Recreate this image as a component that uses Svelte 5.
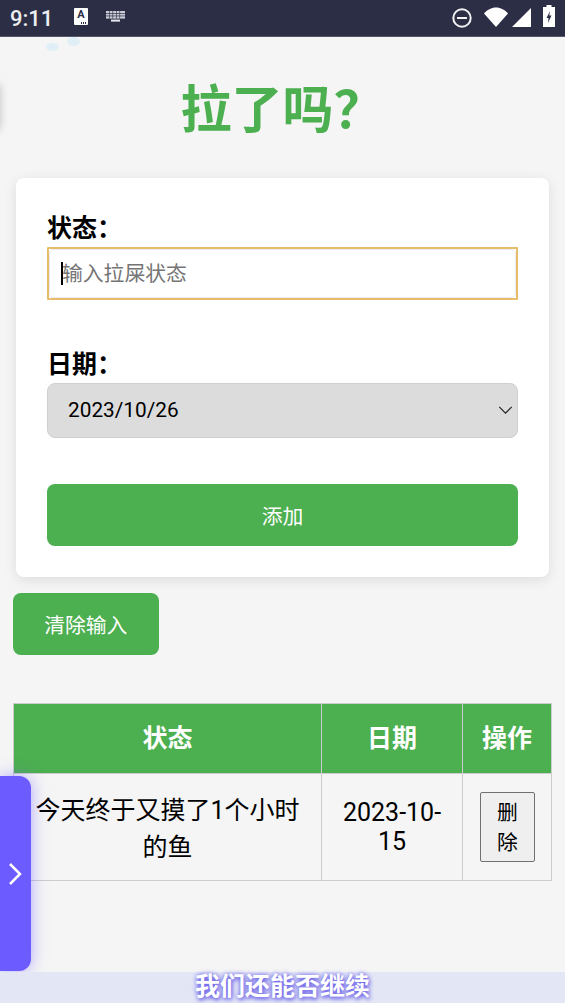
<script>
  const rows = [{ status: '今天终于又摸了1个小时的鱼', date: '2023-10-15' }];
</script>

<div class="page">
  <header class="status">
    <span class="time">9:11</span>
    <span class="note-a"><span>A</span><i></i></span>
    <svg class="kbd" viewBox="0 0 19 11" aria-hidden="true">
      <g fill="#e8e8ee">
        <rect x="0" y="0" width="19" height="7.6" opacity=".85"/>
        <rect x="5" y="8.6" width="9" height="2"/>
      </g>
      <g fill="#2c2e45">
        <rect x="0" y="2" width="19" height=".7"/>
        <rect x="0" y="4.6" width="19" height=".7"/>
        <rect x="3" y="0" width=".6" height="7.6"/>
        <rect x="6.5" y="0" width=".6" height="7.6"/>
        <rect x="10" y="0" width=".6" height="7.6"/>
        <rect x="13.5" y="0" width=".6" height="7.6"/>
      </g>
    </svg>
    <span class="spacer"></span>
    <svg class="dnd" viewBox="0 0 20 20" aria-hidden="true">
      <circle cx="10" cy="10" r="8.7" fill="none" stroke="#f2f2f5" stroke-width="2"/>
      <rect x="5" y="9" width="10" height="2" fill="#f2f2f5"/>
    </svg>
    <svg class="wifi" viewBox="0 0 24 20" aria-hidden="true">
      <path d="M0 6.5C3 3 7.500 .5 12 .5S21 3 24 6.500L12 20Z" fill="#fff"/>
    </svg>
    <svg class="signal" viewBox="0 0 19 19" aria-hidden="true">
      <path d="M19 0V19H0Z" fill="#fff"/>
    </svg>
    <svg class="battery" viewBox="0 0 12 22" aria-hidden="true">
      <path d="M3.500 0H8.500V2H12V22H0V2H3.500Z" fill="#fff"/>
      <path d="M7 6L3.500 13H5.500L5 18L8.500 10.500H6.300Z" fill="#2c2e45"/>
    </svg>
  </header>

  <div class="blobs" aria-hidden="true"><i></i><i></i></div>
  <div class="edge-shadow" aria-hidden="true"></div>

  <h1>拉了吗？</h1>

  <form class="card" onsubmit={(e) => e.preventDefault()}>
    <label class="label" for="state">状态：</label>
    <div class="input-wrap">
      <input id="state" type="text" placeholder="输入拉屎状态" />
      <span class="caret"></span>
    </div>

    <label class="label second" for="date">日期：</label>
    <div class="select-wrap">
      <select id="date"><option>2023/10/26</option></select>
      <svg viewBox="0 0 16 9" aria-hidden="true">
        <path d="M1 1L8 8L15 1" fill="none" stroke="#222" stroke-width="1.300"/>
      </svg>
    </div>

    <button class="btn wide" type="submit">添加</button>
  </form>

  <button class="btn clear" type="button">清除输入</button>

  <table>
    <colgroup>
      <col class="c1" /><col class="c2" /><col class="c3" />
    </colgroup>
    <thead>
      <tr><th>状态</th><th>日期</th><th>操作</th></tr>
    </thead>
    <tbody>
      {#each rows as row}
        <tr>
          <td class="state-cell">{row.status}</td>
          <td>{row.date}</td>
          <td><button class="del" type="button">删除</button></td>
        </tr>
      {/each}
    </tbody>
  </table>

  <div class="side-tab" aria-hidden="true">
    <svg viewBox="0 0 14 24">
      <path d="M2 2L12 12L2 22" fill="none" stroke="#fff" stroke-width="2.500"/>
    </svg>
  </div>

  <div class="subtitle">我们还能否继续</div>
</div>

<style>
  :global(body) {
    margin: 0;
    background: #f5f5f5;
  }

  .page {
    position: relative;
    height: 1003px;
    overflow: hidden;
    background: #f5f5f5;
    font-family: Roboto, "Noto Sans CJK SC", sans-serif;
    color: #000;
  }

  .status {
    display: flex;
    align-items: center;
    height: 36px;
    padding: 0 10px;
    background: #2c2e45;
    border-bottom: 1px solid #55566a;
    box-sizing: content-box;
  }

  .time {
    font-size: 22px;
    font-weight: 500;
    color: #eeeef2;
    width: 64px;
  }

  .note-a {
    position: relative;
    width: 14px;
    height: 17px;
    background: #fff;
    border-radius: 1px;
    display: flex;
    justify-content: center;
    color: #2c2e45;
    font-size: 11px;
    font-weight: 700;
    line-height: 14px;
    margin-top: -3px;
  }

  .note-a i {
    position: absolute;
    right: 1px;
    bottom: 1px;
    width: 6px;
    height: 2px;
    background: repeating-linear-gradient(90deg, #2c2e45 0 1px, #fff 1px 2px);
  }

  .kbd {
    width: 19px;
    height: 11px;
    margin: -3px 0 0 18px;
  }

  .spacer { flex: 1; }

  .dnd {
    width: 20px;
    height: 20px;
    margin-top: -1px;
    margin-right: 12px;
  }

  .wifi {
    width: 24px;
    height: 20px;
    margin-top: -2px;
    margin-right: 4px;
  }

  .signal {
    width: 19px;
    height: 19px;
    margin-top: -1px;
    margin-right: 12px;
  }

  .battery {
    width: 12px;
    height: 22px;
    margin-top: -5px;
  }

  .blobs {
    position: absolute;
    left: 45px;
    top: 37px;
    width: 36px;
    height: 16px;
    overflow: hidden;
  }

  .blobs i {
    position: absolute;
    display: block;
    background: #e0eff6;
    border-radius: 50%;
  }

  .blobs i:first-child { left: 1px; top: 6px; width: 13px; height: 8px; }
  .blobs i:last-child { left: 22px; top: 0; width: 13px; height: 9px; }

  .edge-shadow {
    position: absolute;
    left: -8px;
    top: 84px;
    width: 8px;
    height: 46px;
    border-radius: 4px;
    box-shadow: 0 0 9px rgba(0, 0, 0, .22);
  }

  h1 {
    margin: 0;
    padding-top: 38px;
    height: 107px;
    box-sizing: border-box;
    font-size: 51px;
    line-height: 72px;
    font-weight: 700;
    text-align: center;
    color: #4caf50;
  }

  .card {
    margin: 34px 16px 0;
    padding: 32px 31px 31px;
    height: 399px;
    box-sizing: border-box;
    background: #fff;
    border-radius: 8px;
    box-shadow: 0 3px 13px rgba(0, 0, 0, .1);
  }

  .label {
    display: block;
    height: 37px;
    font-size: 25px;
    line-height: 37px;
    font-weight: 700;
  }

  .label.second {
    margin-top: 47px;
  }

  .input-wrap {
    position: relative;
    height: 53px;
    box-sizing: border-box;
    border: 2px solid #e6bd6a;
    border-radius: 1px;
    margin-bottom: -1px;
  }

  input {
    display: block;
    width: 100%;
    height: 100%;
    box-sizing: border-box;
    padding: 0 12px;
    border: 1px solid #ececec;
    border-radius: 5px;
    background: #fff;
    font: 20.800px Roboto, "Noto Sans CJK SC", sans-serif;
    outline: none;
  }

  input::placeholder { color: #757575; opacity: 1; }

  .caret {
    position: absolute;
    left: 12px;
    top: 13px;
    width: 2px;
    height: 23px;
    background: #000;
  }

  .select-wrap {
    position: relative;
  }

  select {
    display: block;
    width: 100%;
    height: 55px;
    box-sizing: border-box;
    padding: 0 20px 2px;
    appearance: none;
    border: 1.500px solid #cfcfcf;
    border-radius: 8px;
    background: #dcdcdc;
    color: #000;
    font: 20.800px Roboto, "Noto Sans CJK SC", sans-serif;
  }

  .select-wrap svg {
    position: absolute;
    right: 5px;
    top: 23px;
    width: 15px;
    height: 8px;
  }

  .btn {
    display: block;
    border: none;
    border-radius: 8px;
    background: #4caf50;
    color: #fff;
    font: 20.800px Roboto, "Noto Sans CJK SC", sans-serif;
  }

  .wide {
    width: 100%;
    height: 62px;
    margin-top: 46px;
  }

  .clear {
    width: 146.500px;
    height: 62px;
    margin: 16px 0 0 12.500px;
  }

  table {
    width: 538px;
    margin: 48px 0 0 13px;
    table-layout: fixed;
    border-collapse: collapse;
    font-size: 25px;
  }

  .c1 { width: 308px; }
  .c2 { width: 141px; }
  .c3 { width: 89px; }

  th, td {
    border: 1.300px solid #ccc;
    padding: 16px;
    text-align: center;
  }

  th {
    height: 70px;
    box-sizing: border-box;
    padding-top: 13px;
    padding-bottom: 19px;
    background: #4caf50;
    color: #fff;
    font-weight: 700;
  }

  td {
    height: 107px;
    padding-top: 0;
    padding-bottom: 0;
    box-sizing: border-box;
  }

  .state-cell {
    line-height: 37px;
    padding-top: 4px;
  }

  .del {
    display: block;
    width: 55px;
    height: 70px;
    margin: 0 0 0 1px;
    padding: 2px 8px 0;
    box-sizing: border-box;
    border: 1.800px solid #707070;
    border-radius: 2px;
    background: #efefef;
    color: #000;
    font: 20.800px/30px Roboto, "Noto Sans CJK SC", sans-serif;
  }

  .side-tab {
    position: absolute;
    left: 0;
    top: 776px;
    width: 31px;
    height: 195px;
    display: flex;
    align-items: center;
    background: #6c5cff;
    border-radius: 0 12px 12px 0;
    box-shadow: 0 0 16px rgba(108, 92, 255, .5);
  }

  .side-tab svg {
    width: 14px;
    height: 24px;
    margin: 0 0 0 8px;
  }

  .subtitle {
    position: absolute;
    left: 0;
    right: 0;
    bottom: 0;
    height: 31px;
    background: #e3e7f5;
    color: #fff;
    font-size: 25px;
    font-weight: 700;
    line-height: 29px;
    text-align: center;
    text-shadow: 0 0 5px #6a60e8, 1px 2px 4px #6a60e8;
  }
</style>
